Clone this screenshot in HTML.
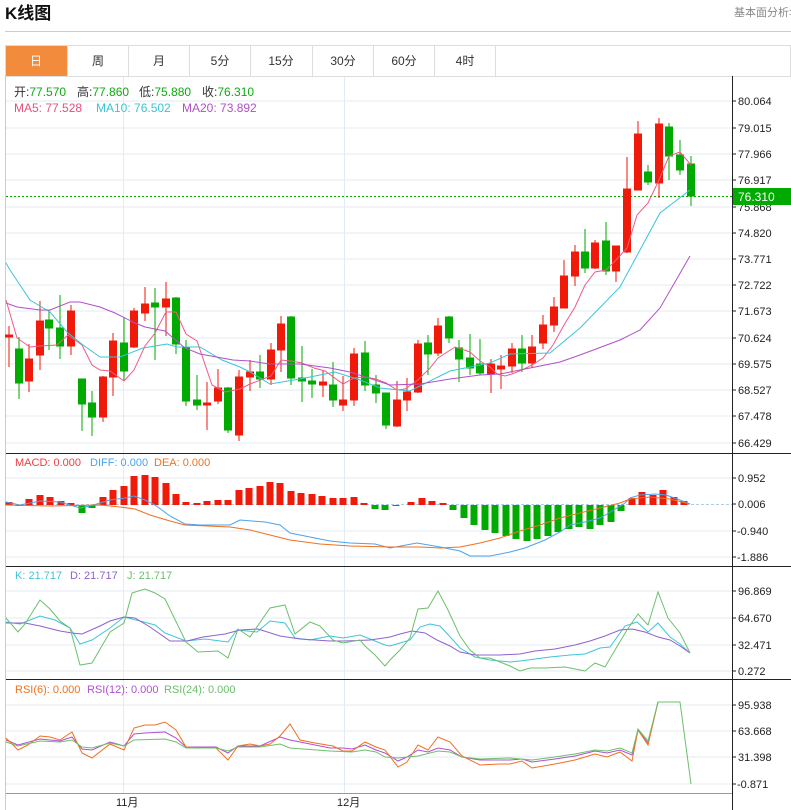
<!DOCTYPE html>
<html><head><meta charset="utf-8"><style>
body{margin:0;background:#fff;width:791px;height:810px;overflow:hidden;font-family:"Liberation Sans","Noto Sans CJK SC",sans-serif}
</style></head><body>
<svg width="791" height="810" style="position:absolute;left:0;top:0" font-family="Liberation Sans, Noto Sans CJK SC, sans-serif">
<text x="5" y="19" font-size="17" font-weight="bold" fill="#111">K线图</text>
<text x="734" y="16" font-size="11" fill="#888">基本面分析&gt;</text>
<line x1="5" y1="31.5" x2="791" y2="31.5" stroke="#ccc"/>
<rect x="5.5" y="45.5" width="785" height="31" fill="#fff" stroke="#ddd"/>
<rect x="6" y="46" width="61" height="30" fill="#f28c3c"/>
<g stroke="#ddd"><line x1="128.5" y1="46" x2="128.5" y2="76"/><line x1="189.5" y1="46" x2="189.5" y2="76"/><line x1="250.5" y1="46" x2="250.5" y2="76"/><line x1="312.5" y1="46" x2="312.5" y2="76"/><line x1="373.5" y1="46" x2="373.5" y2="76"/><line x1="434.5" y1="46" x2="434.5" y2="76"/><line x1="495.5" y1="46" x2="495.5" y2="76"/><line x1="67.5" y1="46" x2="67.5" y2="76"/></g>
<g font-size="12" fill="#333" text-anchor="middle"><text x="36" y="65" fill="#fff">日</text><text x="98" y="65">周</text><text x="159" y="65">月</text><text x="220" y="65">5分</text><text x="281" y="65">15分</text><text x="343" y="65">30分</text><text x="404" y="65">60分</text><text x="465" y="65">4时</text></g>
<line x1="5.5" y1="76" x2="5.5" y2="810" stroke="#ccc"/>
<g stroke="#e3ebf2"><line x1="123.5" y1="77" x2="123.5" y2="793"/><line x1="344.5" y1="77" x2="344.5" y2="793"/>
<line x1="6" y1="101" x2="732" y2="101"/><line x1="6" y1="128" x2="732" y2="128"/><line x1="6" y1="154" x2="732" y2="154"/><line x1="6" y1="180" x2="732" y2="180"/><line x1="6" y1="207" x2="732" y2="207"/><line x1="6" y1="233" x2="732" y2="233"/><line x1="6" y1="259" x2="732" y2="259"/><line x1="6" y1="285" x2="732" y2="285"/><line x1="6" y1="311" x2="732" y2="311"/><line x1="6" y1="338" x2="732" y2="338"/><line x1="6" y1="364" x2="732" y2="364"/><line x1="6" y1="390" x2="732" y2="390"/><line x1="6" y1="416" x2="732" y2="416"/><line x1="6" y1="443" x2="732" y2="443"/>
<line x1="6" y1="478" x2="732" y2="478"/><line x1="6" y1="531" x2="732" y2="531"/><line x1="6" y1="557" x2="732" y2="557"/>
<line x1="6" y1="591" x2="732" y2="591"/><line x1="6" y1="618" x2="732" y2="618"/><line x1="6" y1="645" x2="732" y2="645"/><line x1="6" y1="671" x2="732" y2="671"/>
<line x1="6" y1="705" x2="732" y2="705"/><line x1="6" y1="731" x2="732" y2="731"/><line x1="6" y1="757" x2="732" y2="757"/><line x1="6" y1="784" x2="732" y2="784"/></g>
<line x1="6" y1="504.5" x2="732" y2="504.5" stroke="#a9cfe8" stroke-dasharray="3,2"/>
<g stroke="#222"><line x1="6" y1="453.5" x2="791" y2="453.5"/><line x1="6" y1="566.5" x2="791" y2="566.5"/><line x1="6" y1="679.5" x2="791" y2="679.5"/><line x1="732.5" y1="76" x2="732.5" y2="810"/></g>
<line x1="6" y1="793.5" x2="732" y2="793.5" stroke="#999"/>
<g font-size="11" fill="#222"><g stroke="#222">
<line x1="732" y1="101" x2="736" y2="101"/><line x1="732" y1="128" x2="736" y2="128"/><line x1="732" y1="154" x2="736" y2="154"/><line x1="732" y1="180" x2="736" y2="180"/><line x1="732" y1="207" x2="736" y2="207"/><line x1="732" y1="233" x2="736" y2="233"/><line x1="732" y1="259" x2="736" y2="259"/><line x1="732" y1="285" x2="736" y2="285"/><line x1="732" y1="311" x2="736" y2="311"/><line x1="732" y1="338" x2="736" y2="338"/><line x1="732" y1="364" x2="736" y2="364"/><line x1="732" y1="390" x2="736" y2="390"/><line x1="732" y1="416" x2="736" y2="416"/><line x1="732" y1="443" x2="736" y2="443"/>
<line x1="732" y1="478" x2="736" y2="478"/><line x1="732" y1="504" x2="736" y2="504"/><line x1="732" y1="531" x2="736" y2="531"/><line x1="732" y1="557" x2="736" y2="557"/>
<line x1="732" y1="591" x2="736" y2="591"/><line x1="732" y1="618" x2="736" y2="618"/><line x1="732" y1="645" x2="736" y2="645"/><line x1="732" y1="671" x2="736" y2="671"/>
<line x1="732" y1="705" x2="736" y2="705"/><line x1="732" y1="731" x2="736" y2="731"/><line x1="732" y1="757" x2="736" y2="757"/><line x1="732" y1="784" x2="736" y2="784"/></g>
<text x="738" y="105">80.064</text><text x="738" y="132">79.015</text><text x="738" y="158">77.966</text><text x="738" y="184">76.917</text><text x="738" y="211">75.868</text><text x="738" y="237">74.820</text><text x="738" y="263">73.771</text><text x="738" y="289">72.722</text><text x="738" y="315">71.673</text><text x="738" y="342">70.624</text><text x="738" y="368">69.575</text><text x="738" y="394">68.527</text><text x="738" y="420">67.478</text><text x="738" y="447">66.429</text>
<text x="738" y="482">0.952</text><text x="738" y="508">0.006</text><text x="737" y="535">-0.940</text><text x="737" y="561">-1.886</text>
<text x="738" y="595">96.869</text><text x="738" y="622">64.670</text><text x="738" y="649">32.471</text><text x="738" y="675">0.272</text>
<text x="738" y="709">95.938</text><text x="738" y="735">63.668</text><text x="738" y="761">31.398</text><text x="737" y="788">-0.871</text>
<text x="116" y="806">11月</text><text x="337" y="806">12月</text></g>
<line x1="6" y1="196.5" x2="732" y2="196.5" stroke="#0a0" stroke-dasharray="2,2"/>
<rect x="733" y="188" width="58" height="17" fill="#0a0"/><text x="738" y="201" font-size="12" fill="#fff">76.310</text>
<g font-size="12">
<text x="14" y="96" fill="#333">开:<tspan fill="#1a1">77.570</tspan></text>
<text x="77" y="96" fill="#333">高:<tspan fill="#1a1">77.860</tspan></text>
<text x="139" y="96" fill="#333">低:<tspan fill="#1a1">75.880</tspan></text>
<text x="202" y="96" fill="#333">收:<tspan fill="#1a1">76.310</tspan></text>
<text x="14" y="112" fill="#e8507a">MA5: 77.528</text>
<text x="96" y="112" fill="#3cc4d8">MA10: 76.502</text>
<text x="182" y="112" fill="#b050c8">MA20: 73.892</text>
</g>
<g font-size="11">
<text x="15" y="466" fill="#f03c3c">MACD: 0.000</text><text x="90" y="466" fill="#4aa3f0">DIFF: 0.000</text><text x="154" y="466" fill="#f07020">DEA: 0.000</text>
<text x="15" y="579" fill="#3fc5d8">K: 21.717</text><text x="70" y="579" fill="#9060d0">D: 21.717</text><text x="127" y="579" fill="#6cc06c">J: 21.717</text>
<text x="15" y="693" fill="#f07020">RSI(6): 0.000</text><text x="87" y="693" fill="#b050d0">RSI(12): 0.000</text><text x="164" y="693" fill="#6cc06c">RSI(24): 0.000</text>
</g>
<g stroke-width="1">
<g stroke="#f01a0a" fill="#f01a0a">
<line x1="9" y1="326" x2="9" y2="367"/><rect x="5.5" y="335" width="7" height="2"/>
<line x1="29" y1="344" x2="29" y2="392"/><rect x="25.5" y="359" width="7" height="22"/>
<line x1="40" y1="301" x2="40" y2="370"/><rect x="36.5" y="321" width="7" height="34"/>
<line x1="71" y1="305" x2="71" y2="355"/><rect x="67.5" y="311" width="7" height="35"/>
<line x1="103" y1="376" x2="103" y2="422"/><rect x="99.5" y="377" width="7" height="40"/>
<line x1="113" y1="333" x2="113" y2="396"/><rect x="109.5" y="341" width="7" height="36"/>
<line x1="134" y1="308" x2="134" y2="348"/><rect x="130.5" y="311" width="7" height="36"/>
<line x1="145" y1="287" x2="145" y2="321"/><rect x="141.5" y="304" width="7" height="9"/>
<line x1="166" y1="282" x2="166" y2="336"/><rect x="162.5" y="299" width="7" height="8"/>
<line x1="207" y1="382" x2="207" y2="430"/><rect x="203.5" y="403" width="7" height="2"/>
<line x1="218" y1="369" x2="218" y2="404"/><rect x="214.5" y="388" width="7" height="13"/>
<line x1="239" y1="370" x2="239" y2="441"/><rect x="235.5" y="377" width="7" height="58"/>
<line x1="250" y1="360" x2="250" y2="391"/><rect x="246.5" y="372" width="7" height="5"/>
<line x1="271" y1="343" x2="271" y2="385"/><rect x="267.5" y="350" width="7" height="29"/>
<line x1="281" y1="316" x2="281" y2="372"/><rect x="277.5" y="324" width="7" height="26"/>
<line x1="323" y1="370" x2="323" y2="397"/><rect x="319.5" y="382" width="7" height="3"/>
<line x1="343" y1="376" x2="343" y2="411"/><rect x="339.5" y="400" width="7" height="5"/>
<line x1="354" y1="348" x2="354" y2="406"/><rect x="350.5" y="354" width="7" height="46"/>
<line x1="397" y1="381" x2="397" y2="427"/><rect x="393.5" y="400" width="7" height="26"/>
<line x1="407" y1="378" x2="407" y2="411"/><rect x="403.5" y="392" width="7" height="8"/>
<line x1="418" y1="340" x2="418" y2="393"/><rect x="414.5" y="344" width="7" height="48"/>
<line x1="438" y1="318" x2="438" y2="356"/><rect x="434.5" y="326" width="7" height="27"/>
<line x1="491" y1="359" x2="491" y2="393"/><rect x="487.5" y="364" width="7" height="10"/>
<line x1="501" y1="355" x2="501" y2="389"/><rect x="497.5" y="366" width="7" height="3"/>
<line x1="512" y1="343" x2="512" y2="373"/><rect x="508.5" y="349" width="7" height="17"/>
<line x1="532" y1="335" x2="532" y2="368"/><rect x="528.5" y="347" width="7" height="16"/>
<line x1="543" y1="315" x2="543" y2="349"/><rect x="539.5" y="325" width="7" height="18"/>
<line x1="554" y1="297" x2="554" y2="332"/><rect x="550.5" y="307" width="7" height="18"/>
<line x1="564" y1="260" x2="564" y2="308"/><rect x="560.5" y="276" width="7" height="32"/>
<line x1="575" y1="245" x2="575" y2="286"/><rect x="571.5" y="252" width="7" height="24"/>
<line x1="595" y1="240" x2="595" y2="269"/><rect x="591.5" y="243" width="7" height="25"/>
<line x1="616" y1="246" x2="616" y2="282"/><rect x="612.5" y="246" width="7" height="25"/>
<line x1="627" y1="157" x2="627" y2="253"/><rect x="623.5" y="189" width="7" height="63"/>
<line x1="638" y1="121" x2="638" y2="190"/><rect x="634.5" y="134" width="7" height="56"/>
<line x1="659" y1="118" x2="659" y2="198"/><rect x="655.5" y="124" width="7" height="59"/>
</g>
<g stroke="#0a0" fill="#0a0">
<line x1="19" y1="337" x2="19" y2="399"/><rect x="15.5" y="349" width="7" height="34"/>
<line x1="49" y1="310" x2="49" y2="350"/><rect x="45.5" y="320" width="7" height="8"/>
<line x1="60" y1="295" x2="60" y2="359"/><rect x="56.5" y="328" width="7" height="18"/>
<line x1="82" y1="379" x2="82" y2="431"/><rect x="78.5" y="379" width="7" height="25"/>
<line x1="92" y1="391" x2="92" y2="436"/><rect x="88.5" y="403" width="7" height="14"/>
<line x1="124" y1="318" x2="124" y2="380"/><rect x="120.5" y="343" width="7" height="28"/>
<line x1="155" y1="288" x2="155" y2="360"/><rect x="151.5" y="303" width="7" height="4"/>
<line x1="176" y1="297" x2="176" y2="354"/><rect x="172.5" y="298" width="7" height="46"/>
<line x1="186" y1="340" x2="186" y2="406"/><rect x="182.5" y="348" width="7" height="53"/>
<line x1="197" y1="375" x2="197" y2="410"/><rect x="193.5" y="400" width="7" height="5"/>
<line x1="228" y1="387" x2="228" y2="433"/><rect x="224.5" y="388" width="7" height="42"/>
<line x1="260" y1="355" x2="260" y2="388"/><rect x="256.5" y="372" width="7" height="7"/>
<line x1="291" y1="316" x2="291" y2="385"/><rect x="287.5" y="317" width="7" height="61"/>
<line x1="302" y1="346" x2="302" y2="402"/><rect x="298.5" y="378" width="7" height="3"/>
<line x1="312" y1="369" x2="312" y2="398"/><rect x="308.5" y="381" width="7" height="3"/>
<line x1="333" y1="362" x2="333" y2="407"/><rect x="329.5" y="385" width="7" height="15"/>
<line x1="365" y1="341" x2="365" y2="391"/><rect x="361.5" y="353" width="7" height="32"/>
<line x1="376" y1="375" x2="376" y2="403"/><rect x="372.5" y="385" width="7" height="8"/>
<line x1="386" y1="393" x2="386" y2="429"/><rect x="382.5" y="393" width="7" height="32"/>
<line x1="428" y1="335" x2="428" y2="375"/><rect x="424.5" y="343" width="7" height="11"/>
<line x1="449" y1="316" x2="449" y2="343"/><rect x="445.5" y="317" width="7" height="21"/>
<line x1="459" y1="340" x2="459" y2="382"/><rect x="455.5" y="348" width="7" height="11"/>
<line x1="470" y1="334" x2="470" y2="375"/><rect x="466.5" y="358" width="7" height="10"/>
<line x1="480" y1="339" x2="480" y2="375"/><rect x="476.5" y="364" width="7" height="9"/>
<line x1="522" y1="335" x2="522" y2="372"/><rect x="518.5" y="349" width="7" height="14"/>
<line x1="585" y1="229" x2="585" y2="273"/><rect x="581.5" y="252" width="7" height="16"/>
<line x1="606" y1="222" x2="606" y2="275"/><rect x="602.5" y="241" width="7" height="30"/>
<line x1="648" y1="165" x2="648" y2="185"/><rect x="644.5" y="172" width="7" height="10"/>
<line x1="669" y1="123" x2="669" y2="180"/><rect x="665.5" y="127" width="7" height="29"/>
<line x1="680" y1="140" x2="680" y2="175"/><rect x="676.5" y="155" width="7" height="15"/>
<line x1="691" y1="156" x2="691" y2="206"/><rect x="687.5" y="164" width="7" height="32"/>
</g></g>
<g fill="none" stroke-width="1">
<polyline stroke="#f05a8a" points="6,300 17,338 30,347 40,346 57,345 68,335 82,345 92,365 100,370 110,371 124,381 134,370 145,346 155,333 166,312 176,312 186,334 197,341 212,385 225,392 240,389 250,384 271,376 281,360 291,361 302,363 314,368 325,371 343,384 354,378 365,377 376,379 386,383 397,390 405,389 418,380 430,368 438,358 455,347 470,352 480,361 490,367 497,374 505,376 512,374 522,370 532,365 543,358 553,345 564,325 575,307 585,285 595,272 606,270 616,260 627,248 637,215 648,203 659,180 669,156 680,152 691,165"/>
<polyline stroke="#3cc4d8" points="6,263 10,270 30,300 50,312 67,332 83,345 100,357 120,357 143,348 167,344 177,347 200,347 222,360 240,367 250,372 270,384 300,379 335,372 360,380 380,388 410,391 450,371 490,363 510,354 550,353 580,328 620,287 640,250 660,213 690,190"/>
<polyline stroke="#b050c8" points="6,303 17,307 40,310 50,310 70,302 80,302 100,307 115,313 135,323 145,327 165,331 185,348 200,354 233,360 250,361 270,364 300,364 330,368 350,372 390,385 420,384 450,379 480,375 500,374 530,368 560,362 580,355 620,340 640,330 660,308 690,256"/>
</g>
<g fill="#f01a0a">
<rect x="5.5" y="502" width="7" height="3"/><rect x="25.5" y="499" width="7" height="6"/><rect x="36.5" y="495" width="7" height="10"/><rect x="46.5" y="497" width="7" height="8"/><rect x="57.5" y="501" width="7" height="4"/><rect x="67.5" y="503" width="7" height="2"/>
<rect x="99.5" y="497" width="7" height="8"/><rect x="109.5" y="490" width="7" height="15"/><rect x="120.5" y="486" width="7" height="19"/><rect x="130.5" y="476" width="7" height="29"/><rect x="141.5" y="475" width="7" height="30"/><rect x="151.5" y="477" width="7" height="28"/><rect x="162.5" y="483" width="7" height="22"/><rect x="172.5" y="494" width="7" height="11"/><rect x="182.5" y="502" width="7" height="3"/><rect x="193.5" y="503" width="7" height="2"/><rect x="203.5" y="501" width="7" height="4"/><rect x="214.5" y="500" width="7" height="5"/><rect x="224.5" y="500" width="7" height="5"/><rect x="235.5" y="490" width="7" height="15"/><rect x="245.5" y="488" width="7" height="17"/><rect x="256.5" y="486" width="7" height="19"/><rect x="266.5" y="482" width="7" height="23"/><rect x="276.5" y="483" width="7" height="22"/><rect x="287.5" y="491" width="7" height="14"/><rect x="297.5" y="493" width="7" height="12"/><rect x="308.5" y="494" width="7" height="11"/><rect x="318.5" y="496" width="7" height="9"/><rect x="329.5" y="498" width="7" height="7"/><rect x="339.5" y="498" width="7" height="7"/><rect x="350.5" y="497" width="7" height="8"/><rect x="360.5" y="503" width="7" height="2"/>
<rect x="407.5" y="502" width="7" height="3"/><rect x="418.5" y="498" width="7" height="7"/><rect x="428.5" y="501" width="7" height="4"/><rect x="439.5" y="503" width="7" height="2"/>
<rect x="628.5" y="498" width="7" height="7"/><rect x="638.5" y="492" width="7" height="13"/><rect x="649.5" y="495" width="7" height="10"/><rect x="659.5" y="490" width="7" height="15"/><rect x="670.5" y="497" width="7" height="8"/><rect x="680.5" y="501" width="7" height="4"/>
</g>
<g fill="#0a0">
<rect x="15.5" y="505" width="7" height="1"/><rect x="78.5" y="505" width="7" height="8"/><rect x="88.5" y="505" width="7" height="3"/><rect x="371.5" y="505" width="7" height="4"/><rect x="381.5" y="505" width="7" height="5"/><rect x="392.5" y="505" width="7" height="1"/>
<rect x="449.5" y="505" width="7" height="5"/><rect x="460.5" y="505" width="7" height="13"/><rect x="470.5" y="505" width="7" height="20"/><rect x="481.5" y="505" width="7" height="25"/><rect x="491.5" y="505" width="7" height="28"/><rect x="502.5" y="505" width="7" height="31"/><rect x="512.5" y="505" width="7" height="34"/><rect x="523.5" y="505" width="7" height="36"/><rect x="533.5" y="505" width="7" height="34"/><rect x="544.5" y="505" width="7" height="31"/><rect x="554.5" y="505" width="7" height="27"/><rect x="565.5" y="505" width="7" height="24"/><rect x="575.5" y="505" width="7" height="22"/><rect x="586.5" y="505" width="7" height="24"/><rect x="596.5" y="505" width="7" height="20"/><rect x="607.5" y="505" width="7" height="17"/><rect x="617.5" y="505" width="7" height="6"/>
</g>
<g fill="none">
<polyline stroke="#4aa3f0" points="6,502 20,505 40,501 60,502 80,508 90,506 110,500 125,498 134,496 145,500 155,505 170,516 185,524 200,525 230,525 240,520 265,522 280,525 290,533 310,537 330,541 350,543 375,544 390,548 417,543 440,547 460,551 470,556 490,556 510,552 525,548 545,540 560,532 570,525 585,522 600,518 612,511 625,503 630,498 640,495 655,494 666,495 680,500 690,504"/>
<polyline stroke="#f07020" points="6,505 50,506 100,505 120,507 135,509 150,515 170,521 185,525 230,527 250,530 270,535 290,540 320,544 350,546 390,547 420,547 440,548 460,547 480,543 500,538 520,531 540,525 560,518 580,513 600,508 620,503 630,499 650,497 670,499 690,504"/>
<polyline stroke="#3fc5d8" points="6,622 20,624 40,616 55,620 70,628 80,644 92,640 110,628 124,617 140,621 155,625 165,633 186,641 205,639 228,642 237,630 257,632 270,621 285,623 295,638 310,640 330,636 343,638 360,635 370,639 385,645 390,646 400,643 410,640 420,627 430,624 440,626 453,640 460,648 475,657 490,660 510,662 520,661 535,659 550,657 570,655 585,654 600,648 610,647 625,626 637,622 648,632 658,623 670,637 680,644 690,653"/>
<polyline stroke="#9060d0" points="6,623 25,623 40,626 60,631 72,633 82,634 100,626 110,621 124,617 135,618 150,627 170,641 187,641 203,637 225,634 240,630 258,629 280,636 300,639 330,641 345,641 370,640 390,637 400,634 412,631 425,633 437,640 450,646 460,652 475,655 500,655 520,654 535,651 555,649 575,645 590,641 605,636 620,630 632,629 645,632 658,637 670,640 680,646 690,653"/>
<polyline stroke="#6cc06c" points="6,618 18,632 25,624 40,600 50,609 60,621 70,628 80,665 92,663 110,632 124,623 132,593 145,589 155,593 165,599 186,642 198,652 218,651 228,658 238,629 250,637 270,608 285,605 295,634 310,622 320,626 333,640 343,643 360,640 365,646 375,655 385,666 390,660 400,650 410,638 418,609 428,608 438,591 448,610 460,636 470,650 480,658 490,658 500,662 510,666 520,671 530,668 545,668 565,667 575,669 585,671 595,663 605,667 615,650 627,630 638,614 648,625 658,592 668,618 680,633 690,653"/>
<polyline stroke="#b050d0" points="6,740 18,745 40,739 60,741 72,737 82,749 92,750 110,742 124,746 134,734 145,733 165,732 176,738 186,747 216,747 228,753 238,746 260,746 280,737 290,740 330,748 343,748 352,749 365,745 376,750 385,753 398,761 407,757 418,750 428,752 438,748 450,750 462,757 480,760 510,760 522,759 532,762 555,759 575,756 595,751 607,753 620,750 632,755 638,730 648,743 658,702 680,702"/>
<polyline stroke="#f07020" points="6,738 18,750 28,745 40,736 50,737 60,740 72,732 82,753 92,758 110,744 124,750 134,728 145,725 155,725 165,722 176,730 186,747 200,748 216,748 228,760 238,746 250,744 260,746 270,744 280,736 290,724 300,740 315,743 333,746 343,751 352,751 365,742 376,747 385,750 398,767 407,762 418,745 428,750 438,737 450,742 462,756 480,765 500,764 510,764 522,761 532,768 555,764 575,760 595,754 607,757 620,752 632,761 638,730 648,745 658,702 680,702"/>
<polyline stroke="#6cc06c" points="6,742 18,746 40,741 60,742 72,740 82,747 92,748 110,743 124,746 134,740 165,739 176,742 186,748 216,748 228,751 238,747 260,747 280,744 290,748 330,751 352,752 365,750 376,752 385,757 398,758 418,756 438,751 450,752 462,757 480,759 510,758 532,760 555,757 575,754 595,750 607,751 620,748 632,753 638,729 648,741 658,702 680,702 691,784"/>
</g>
</svg>
</body></html>
